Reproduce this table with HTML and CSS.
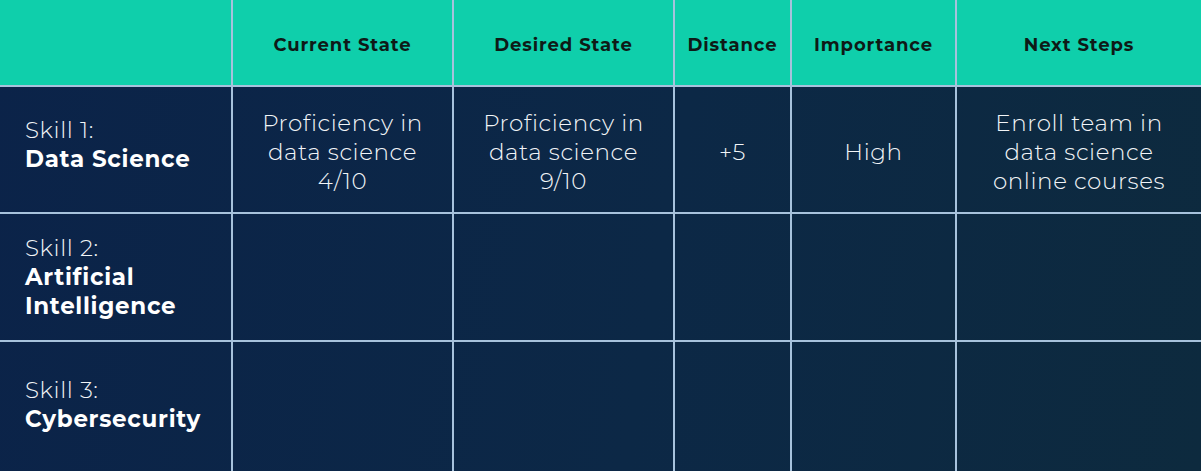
FILE: index.html
```html
<!DOCTYPE html>
<html lang="en">
<head>
<meta charset="utf-8">
<title>Skills Gap Analysis</title>
<link rel="stylesheet" href="styles.css">
</head>
<body>
<table class="gap-table">
  <colgroup>
    <col class="c-skill">
    <col class="c-current">
    <col class="c-desired">
    <col class="c-distance">
    <col class="c-importance">
    <col class="c-next">
  </colgroup>
  <thead>
    <tr class="head-row">
      <th></th>
      <th>Current State</th>
      <th>Desired State</th>
      <th>Distance</th>
      <th>Importance</th>
      <th>Next Steps</th>
    </tr>
  </thead>
  <tbody>
    <tr class="row-1">
      <td class="skill">Skill 1:<br><strong>Data Science</strong></td>
      <td>Proficiency in<br>data science<br>4/10</td>
      <td>Proficiency in<br>data science<br>9/10</td>
      <td>+5</td>
      <td>High</td>
      <td>Enroll team in<br>data science<br>online courses</td>
    </tr>
    <tr class="row-2">
      <td class="skill">Skill 2:<br><strong>Artificial<br>Intelligence</strong></td>
      <td></td><td></td><td></td><td></td><td></td>
    </tr>
    <tr class="row-3">
      <td class="skill">Skill 3:<br><strong>Cybersecurity</strong></td>
      <td></td><td></td><td></td><td></td><td></td>
    </tr>
  </tbody>
</table>
</body>
</html>
```

FILE: styles.css
```css
html, body {
  margin: 0;
  padding: 0;
}
body {
  width: 1201px;
  height: 471px;
  overflow: hidden;
  background: linear-gradient(100deg, #0b2349 0%, #0c2846 55%, #0d2a3e 100%);
  font-family: "Montserrat", "Inter", "Noto Sans", sans-serif;
  color: #ffffff;
}
.gap-table {
  width: 1201px;
  border-collapse: collapse;
  table-layout: fixed;
}
.c-skill { width: 232px; }
.c-current { width: 221px; }
.c-desired { width: 221px; }
.c-distance { width: 117px; }
.c-importance { width: 165px; }
.c-next { width: 245px; }

.gap-table th,
.gap-table td {
  border-left: 2px solid #a7c2dc;
  border-top: 2px solid #a7c2dc;
  padding: 0;
  text-align: center;
  vertical-align: middle;
}
.gap-table th:first-child,
.gap-table td:first-child {
  border-left: none;
}
.gap-table thead th {
  border-top: none;
  background: #0fcfab;
  color: #0e1a17;
  font-weight: 700;
  font-size: 18px;
  letter-spacing: 0.9px;
  height: 86px;
  padding-top: 4px;
  box-sizing: border-box;
}
.gap-table thead tr {
  border-bottom: 2px solid #a7e6db;
}
.gap-table td {
  font-size: 23px;
  font-weight: 300;
  line-height: 29px;
  letter-spacing: 0.6px;
  color: #f2f5f8;
  padding-top: 5px;
}
.row-1 td { height: 120px; }
.row-2 td { height: 121px; }
.row-3 td { height: 125px; }
.gap-table td.skill {
  text-align: left;
  padding: 0 0 5px 25px;
}
.gap-table tr.row-1 td.skill {
  height: 115px;
  padding-bottom: 10px;
}
.gap-table tr.row-2 td.skill {
  padding-top: 3px;
  padding-bottom: 2px;
}
.gap-table td.skill strong {
  font-weight: 700;
  letter-spacing: 0.7px;
  color: #ffffff;
}
```
